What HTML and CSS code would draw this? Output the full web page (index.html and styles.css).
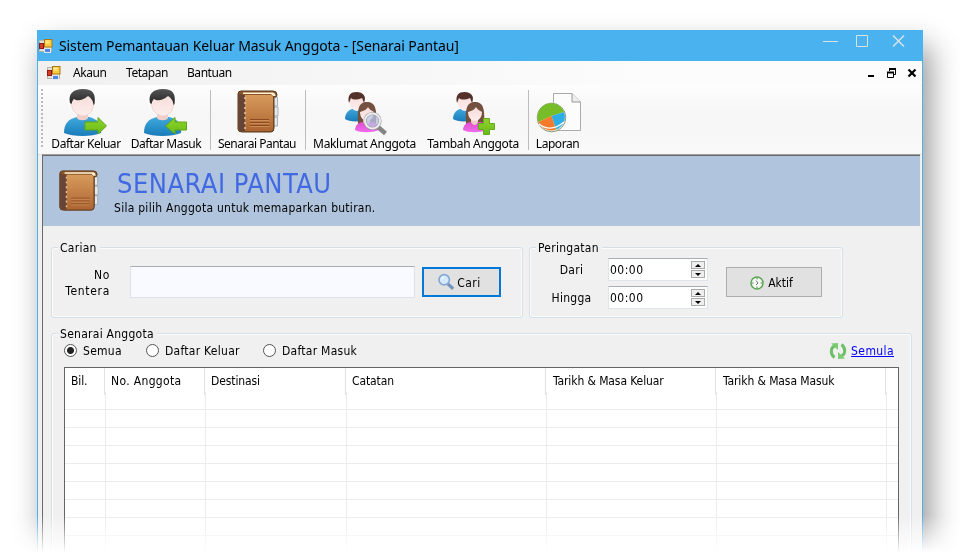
FILE: index.html
```html
<!DOCTYPE html>
<html lang="ms">
<head>
<meta charset="utf-8">
<title>Sistem Pemantauan Keluar Masuk Anggota</title>
<link rel="stylesheet" href="styles.css">
</head>
<body>
<svg class="defs" width="0" height="0" aria-hidden="true">
  <defs>
    <linearGradient id="shirt" x1="0" y1="0" x2="0" y2="1"><stop offset="0" stop-color="#3fa9dc"/><stop offset="1" stop-color="#1a7cba"/></linearGradient>
    <linearGradient id="pink" x1="0" y1="0" x2="0" y2="1"><stop offset="0" stop-color="#e04fc8"/><stop offset="1" stop-color="#f06bf0"/></linearGradient>
    <linearGradient id="skin" x1="0" y1="0" x2="0" y2="1"><stop offset="0" stop-color="#f6dad8"/><stop offset="1" stop-color="#fdeeec"/></linearGradient>
    <linearGradient id="hair" x1="0" y1="0" x2="0" y2="1"><stop offset="0" stop-color="#555"/><stop offset="1" stop-color="#222"/></linearGradient>
    <linearGradient id="green" x1="0" y1="0" x2="0" y2="1"><stop offset="0" stop-color="#90d42c"/><stop offset="1" stop-color="#6abb18"/></linearGradient>
    <linearGradient id="leather" x1="0" y1="0" x2="0" y2="1"><stop offset="0" stop-color="#d89a5c"/><stop offset="1" stop-color="#ad6632"/></linearGradient>
    <symbol id="app" viewBox="0 0 14 14">
      <rect x=".5" y="1.500" width="12" height="11" fill="#e4e0d8" stroke="#bab4a8"/>
      <rect x=".5" y="4.500" width="4" height="5" fill="#d83a24" stroke="#8c1c10"/>
      <rect x="5.500" y=".5" width="7.500" height="7.500" fill="#fbcb3c" stroke="#a8781a"/>
      <rect x="6.500" y="1.500" width="4" height="3" fill="#ffe68a"/>
      <rect x="5.500" y="9.500" width="6" height="4" fill="#4f86e0" stroke="#dfe8f8"/>
    </symbol>
    <symbol id="man" viewBox="0 0 48 48">
      <path d="M2 45C2 36 6 31 15 29L27 29C36 31 40 37 39 45C30 49 11 49 2 45Z" fill="url(#shirt)"/>
      <path d="M15 24H26V30C25 33 16 33 15 30Z" fill="#f1cfcb"/>
      <path d="M9 13C9 5 14 3 21 3S33 6 32 14C32 22 27 28 21 28S9 22 9 13Z" fill="url(#skin)" stroke="#e6c4c0" stroke-width=".6"/>
      <path d="M8 15C6 6 11 1 21 1S34 6 32.500 16L31.500 17C31 12 29 10 26 8C20 13 15 13 12 11C10.500 12 10 14 9.500 16Z" fill="url(#hair)"/>
    </symbol>
    <symbol id="pair" viewBox="0 0 48 48">
      <path d="M4 31C4 24 9 21 14 20L25 22V32C18 34 8 34 4 31Z" fill="url(#shirt)"/>
      <ellipse cx="16" cy="14" rx="7.500" ry="9" fill="url(#skin)"/>
      <path d="M8 15C6 7 10 4 15.500 4C22 4 26 8 23 15L21 10C16 12 12 12 10 10Z" fill="#54302a"/>
      <path d="M17 36C16 20 18 14 26 14C34 14 36 20 35 36Z" fill="#73503f"/>
      <path d="M14 42C14 37 18 34 22 34H30C35 34 39 37 38 42C31 45 19 45 14 42Z" fill="url(#pink)"/>
      <path d="M22 30H29V34C27 38 24 38 22 34Z" fill="#f2cdc8"/>
      <path d="M19 24C23 23 26 21 27 19C28 21 31 23 33 24C33 30 29 33 26 33S19 30 19 24Z" fill="url(#skin)"/>
    </symbol>
    <symbol id="book" viewBox="0 0 48 48">
      <path d="M39 9h5.500v9H39zM39 19h6v9H39zM39 29h5.500v9H39z" fill="#e4e9ed" stroke="#9aa0a6" stroke-width=".8"/>
      <path d="M5 6Q5 3 8 3H40Q44 3 44 7L43 9H41V40Q41 44 38 44H9Q5 44 5 41Z" fill="#8a5428" stroke="#5c3a1c"/>
      <path d="M10 4.500H40Q42.500 5 42.500 8H40L38 6H10Z" fill="#fff4d4"/>
      <path d="M12 7H37Q40 7 40 10V40Q40 43 37 43H12Z" fill="url(#leather)"/>
      <path d="M5.500 6Q8 7 12 7V43H7Q5.500 43 5.500 40Z" fill="#664536"/>
      <path d="M12 9V42" stroke="#e9c49a" stroke-width="1.500" stroke-dasharray="2 3"/>
      <path d="M17 31.500H36M17 34.500H36M17 37.500H36" stroke="#8b4a20"/>
      <path d="M17 32.500H36M17 35.500H36M17 38.500H36" stroke="#dc9f68" stroke-width=".6"/>
    </symbol>
    <symbol id="lens" viewBox="0 0 20 20">
      <path d="M12 12L18 17.500" stroke="#6f93bd" stroke-width="3.400"/>
      <circle cx="8" cy="7.500" r="5.800" fill="#d6e8fa" stroke="#86aad6" stroke-width="1.900"/>
      <path d="M5 7Q5.500 4.500 8 4.200" stroke="#fff" stroke-width="1.300" fill="none"/>
    </symbol>
  </defs>
</svg>

<div class="stage">
<main class="window">
  <header class="titlebar">
    <svg class="app-icon"><use href="#app"/></svg>
    <h1 class="title">Sistem Pemantauan Keluar Masuk Anggota - [Senarai Pantau]</h1>
    <svg class="caption" viewBox="0 0 84 14" fill="none" stroke="#d8e3e8">
      <path d="M0 7.500H15M33.500 1.500H44.500V12.500H33.500Z"/><path d="M70 1.500L81 12.500M81 1.500L70 12.500" stroke-width="1.500"/>
    </svg>
  </header>

  <nav class="menubar">
    <svg class="app-icon"><use href="#app"/></svg>
    <span class="menu m1">Akaun</span><span class="menu m2">Tetapan</span><span class="menu m3">Bantuan</span>
    <svg class="mdi" viewBox="0 0 50 10" fill="none" stroke="#000">
      <path d="M1 8H7M22 1H29M20 4.500H27" stroke-width="2"/>
      <path d="M22.500 1V3M28.500 1V6.500H26M20.500 4V9.500H26.500V4"/>
      <path d="M41.500 1.500L48.500 8.500M48.500 1.500L41.500 8.500" stroke-width="2.200"/>
    </svg>
  </nav>

  <div class="toolbar">
    <i class="grip"></i>
    <div class="tool t1">
      <svg viewBox="0 0 48 48"><use href="#man"/><path d="M23 34H36V29.500L44.500 38L36 46V42H23Z" fill="url(#green)" stroke="#5ea616"/></svg>
      <span>Daftar Keluar</span>
    </div>
    <div class="tool t2">
      <svg viewBox="0 0 48 48"><use href="#man"/><path d="M44.500 34H33V29.500L23.500 38L33 46V42H44.500Z" fill="url(#green)" stroke="#5ea616"/></svg>
      <span>Daftar Masuk</span>
    </div>
    <i class="sep s1"></i>
    <div class="tool t3">
      <svg><use href="#book"/></svg>
      <span>Senarai Pantau</span>
    </div>
    <i class="sep s2"></i>
    <div class="tool t4">
      <svg viewBox="0 0 48 48"><use href="#pair"/><path d="M37 39L44.500 45.500" stroke="#858585" stroke-width="4.500"/><circle cx="31.500" cy="33" r="7.500" fill="#b9c6ea" fill-opacity=".75" stroke="#999" stroke-width="3.200"/><circle cx="31.500" cy="33" r="7.500" fill="none" stroke="#ececec" stroke-width="2"/></svg>
      <span>Maklumat Anggota</span>
    </div>
    <div class="tool t5">
      <svg viewBox="0 0 48 48"><use href="#pair"/><path d="M34.500 30.500H40.500V35.500H45.500V41.500H40.500V46.500H34.500V41.500H29.500V35.500H34.500Z" fill="url(#green)" stroke="#64ab20"/></svg>
      <span>Tambah Anggota</span>
    </div>
    <i class="sep s3"></i>
    <div class="tool t6">
      <svg viewBox="1 0 48 48">
        <path d="M20.500 5.500H39L47.500 14V42.500H20.500Z" fill="#fcfcfc" stroke="#aaa"/><path d="M39 5.500V14H47.500" fill="#eee" stroke="#999"/>
        <circle cx="18.500" cy="29.500" r="14.300" fill="#eef3e4" stroke="#8a9a78"/>
        <path d="M18.500 28L5.500 34A13.500 13.500 0 1 1 31 24Z" fill="#76bd28"/>
        <path d="M18.500 28L31 24A13.500 13.500 0 0 1 23 41.500Z" fill="#2fade6"/>
        <path d="M18.500 28L23 41.500A13.500 13.500 0 0 1 5.500 34Z" fill="#f47a2c"/>
        <path d="M6 36Q18 45 31 34" fill="none" stroke="#fff" stroke-width="1.300"/>
      </svg>
      <span>Laporan</span>
    </div>
  </div>

  <div class="client">
    <section class="banner">
      <svg class="banner-icon"><use href="#book"/></svg>
      <div>
        <h2>SENARAI PANTAU</h2>
        <p>Sila pilih Anggota untuk memaparkan butiran.</p>
      </div>
    </section>

    <div class="filters">
      <fieldset class="group search">
        <legend>Carian</legend>
        <div class="search-row">
          <label for="no">No Tentera</label>
          <input id="no" type="text">
          <button class="btn primary"><svg class="lens"><use href="#lens"/></svg>Cari</button>
        </div>
      </fieldset>
      <fieldset class="group remind">
        <legend>Peringatan</legend>
        <div class="remind-row">
          <div class="times">
            <span class="time-label">Dari</span><div class="time"><span>00:00</span><i class="spin"><b class="up"></b><b class="down"></b></i></div>
            <span class="time-label">Hingga</span><div class="time"><span>00:00</span><i class="spin"><b class="up"></b><b class="down"></b></i></div>
          </div>
          <button class="btn"><svg class="clock" viewBox="0 0 14 14"><circle cx="7" cy="7" r="6" fill="#f4faf2" stroke="#5aa552" stroke-width="1.500"/><path d="M7 2V3.500M7 10.500V12M2 7H3.500M10.500 7H12M6 4.500L8 7L6 9" stroke="#566" fill="none" stroke-width=".9"/></svg>Aktif</button>
        </div>
      </fieldset>
    </div>

    <fieldset class="group list">
      <legend>Senarai Anggota</legend>
      <div class="options">
        <span class="radio on r1">Semua</span>
        <span class="radio r2">Daftar Keluar</span>
        <span class="radio r3">Daftar Masuk</span>
        <span class="refresh">
          <svg viewBox="0 0 18 18"><path d="M7 3.500C1 5 1 12 5.500 15.500" fill="none" stroke="#6cbf64" stroke-width="3"/><path d="M2 1.500L9 1V8Z" fill="#7acb72"/><path d="M11 14.500C17 13 17 6 12.500 2.500" fill="none" stroke="#6cbf64" stroke-width="3"/><path d="M16 16.500L9 17V10Z" fill="#7acb72"/></svg>
          <a href="#">Semula</a>
        </span>
      </div>
      <div class="grid">
        <div class="head"><span>Bil.</span><span class="wide">No. Anggota</span><span>Destinasi</span><span>Catatan</span><span class="date">Tarikh &amp; Masa Keluar</span><span class="date">Tarikh &amp; Masa Masuk</span></div>
        <div class="row"><i></i><i></i><i></i><i></i><i></i><i></i></div>
        <div class="row"><i></i><i></i><i></i><i></i><i></i><i></i></div>
        <div class="row"><i></i><i></i><i></i><i></i><i></i><i></i></div>
        <div class="row"><i></i><i></i><i></i><i></i><i></i><i></i></div>
        <div class="row"><i></i><i></i><i></i><i></i><i></i><i></i></div>
        <div class="row"><i></i><i></i><i></i><i></i><i></i><i></i></div>
        <div class="row"><i></i><i></i><i></i><i></i><i></i><i></i></div>
        <div class="row"><i></i><i></i><i></i><i></i><i></i><i></i></div>
        <div class="row"><i></i><i></i><i></i><i></i><i></i><i></i></div>
      </div>
    </fieldset>
  </div>
</main>
</div>
</body>
</html>
```
FILE: styles.css
```css
*, *::before, *::after { box-sizing: border-box; }
body { margin: 0; background: #fff; overflow: hidden; color: #000; font: 12px/16px "DejaVu Sans Condensed", "DejaVu Sans", sans-serif; font-stretch: condensed; letter-spacing: .27px; }
.defs { position: absolute; }
h1, h2, p { margin: 0; font-weight: normal; }
svg { display: block; flex: none; }
i, b { display: block; flex: none; }

.stage { height: 560px; padding: 30px 37px 0; overflow: hidden; -webkit-mask-image: linear-gradient(#000 515px, transparent 553px); mask-image: linear-gradient(#000 515px, transparent 553px); }
.window { width: 886px; height: 600px; background: #f0f0f0; border: 1px solid #49b2ef; border-top: 0; box-shadow: 7px 16px 28px rgba(0, 0, 0, .42); }

.titlebar { height: 31px; display: flex; align-items: center; background: #49b2ef; font-family: "Noto Sans", sans-serif; }
.app-icon { width: 14px; height: 14px; }
.titlebar .app-icon { margin-left: 1px; }
.title { margin-left: 6px; font-size: 14px; line-height: 20px; letter-spacing: -.09px; white-space: nowrap; }
.caption { width: 84px; height: 14px; margin: -9px 15px 0 auto; }

.menubar { height: 24px; display: flex; align-items: center; background: linear-gradient(90deg, #f0f0f0, #fcfcfc 70%); font-family: "Noto Sans", sans-serif; letter-spacing: -.45px; }
.menubar .app-icon { margin-left: 9px; }
.menu { flex: none; }
.m1 { width: 53px; margin-left: 12px; }
.m2 { width: 61px; }
.mdi { width: 50px; height: 10px; margin: 0 5px 0 auto; }

.toolbar { height: 70px; display: flex; background: linear-gradient(#fdfdfd, #f6f6f6 45%, #f9f9f9); border-bottom: 1px solid #dcdcdc; border-radius: 0 3px 3px 0; font-family: "Noto Sans", sans-serif; letter-spacing: -.45px; }
.grip { width: 2px; height: 58px; margin: 4px 3px 0; background: repeating-linear-gradient(#bbb 0 2px, transparent 2px 4px); }
.tool { flex: none; display: flex; flex-direction: column; align-items: center; padding-top: 3px; white-space: nowrap; }
.tool svg { width: 48px; height: 48px; }
.tool span { line-height: 16px; }
.t1, .t2 { width: 80px; }
.t3 { width: 92px; letter-spacing: -.5px; }
.t4 { width: 117px; letter-spacing: -.33px; }
.t5 { width: 100px; letter-spacing: -.35px; }
.t6 { width: 57px; }
.sep { width: 1px; height: 60px; margin-top: 5px; background: #bdbdbd; }
.s1 { margin-left: 4px; }
.s2 { margin-left: 2px; }
.s3 { margin-left: 5px; }

.client { height: 480px; margin: 0 2px 0 4px; border: 1px solid #696969; border-right: 0; border-width: 1px 0 0 1px; box-shadow: 0 -1px #a0a0a0; }
.banner { height: 70px; display: flex; background: #b0c4de; }
.banner-icon { width: 46px; height: 46px; margin: 12px 0 0 12px; }
.banner h2 { margin: 12px 0 0 16px; font-size: 27px; line-height: 32px; letter-spacing: .5px; color: #4169e1; white-space: nowrap; }
.banner p { margin-left: 13px; }

.filters { display: flex; gap: 6px; padding: 13px 0 0 8px; }
.group { min-width: 0; margin: 0; padding: 0; border: 1px solid #d5dfe8; border-radius: 3px; box-shadow: inset 0 0 0 1px #fafcfd; }
.group legend { height: 16px; margin-left: 6px; padding: 0 3px 0 2px; line-height: 18px; background: #f0f0f0; }
.search { width: 472px; height: 79px; }
.remind { width: 314px; height: 79px; }
.search-row { display: flex; align-items: flex-start; padding-top: 11px; }
.search-row label { width: 53px; margin: 1px 0 0 5px; text-align: right; letter-spacing: .7px; }
.search-row input { width: 285px; height: 32px; margin-left: 20px; padding: 0 4px; background: #f8faff; border: 1px solid #dde3ec; border-top-color: #a9adb5; font: inherit; }
.btn { display: flex; align-items: center; justify-content: center; width: 96px; height: 30px; padding: 1px 0 0; border: 1px solid #adadad; background: #e1e1e1; color: #000; font: inherit; font-stretch: condensed; }
.search-row .btn { width: 79px; margin: 1px 0 0 7px; border: 2px solid #0078d7; letter-spacing: .5px; }
.lens { width: 18px; height: 18px; margin: -2px 2px 0 -5px; }
.clock { width: 14px; height: 14px; margin-right: 4px; }
.remind-row { display: flex; align-items: flex-start; padding-top: 3px; }
.times { display: grid; grid-template-columns: 78px 100px; row-gap: 5px; align-items: center; text-align: center; }
.time-label { padding-left: 5px; }
.time { display: flex; align-items: center; height: 23px; padding: 0 2px 0 1px; background: #fff; border: 1px solid #dfe4ea; border-top-color: #a9adb5; letter-spacing: .5px; }
.spin { width: 14px; margin-left: auto; }
.spin b { position: relative; height: 8px; border: 1px solid #aaa; background: #efefef; margin: 1px 0; }
.spin b::after { content: ""; position: absolute; left: 3px; top: 2px; border: 3px solid transparent; }
.spin .up::after { border-top: 0; border-bottom-color: #000; }
.spin .down::after { border-bottom: 0; border-top-color: #000; }
.remind .btn { margin: 9px 0 0 18px; padding-right: 5px; letter-spacing: 0; }

.list { width: 861px; height: 300px; margin: 7px 0 0 8px; }
.options { display: flex; align-items: center; height: 20px; margin: 0 17px 0 12px; }
.radio { display: flex; align-items: center; white-space: nowrap; line-height: 18px; }
.radio::before { content: ""; width: 13px; height: 13px; margin: -2px 6px 0 0; border: 1px solid #555; border-radius: 50%; background: #fff; }
.radio.on::before { background: radial-gradient(#222 0 3px, #fff 4px); }
.r1 { width: 82px; }
.r2 { width: 117px; }
.refresh { display: flex; align-items: center; margin-left: auto; }
.refresh svg { width: 18px; height: 18px; margin-right: 4px; }
.refresh a { color: #00f; letter-spacing: .4px; }
.grid { width: 835px; height: 260px; margin: 6px 0 0 12px; background: #fff; border: 1px solid #646464; }
.head, .row { display: grid; grid-template-columns: 40px 100px 141px 200px 170px 170px; }
.head { height: 24px; line-height: 27px; white-space: nowrap; letter-spacing: -.1px; }
.head span { padding-left: 6px; border-right: 1px solid #e2e2e2; }
.head .wide { letter-spacing: .35px; }
.head .date { padding-left: 7px; }
.row { height: 18px; padding-left: 1px; border-bottom: 1px solid #ececec; }
.row i { border-right: 1px solid #ececec; }
```
